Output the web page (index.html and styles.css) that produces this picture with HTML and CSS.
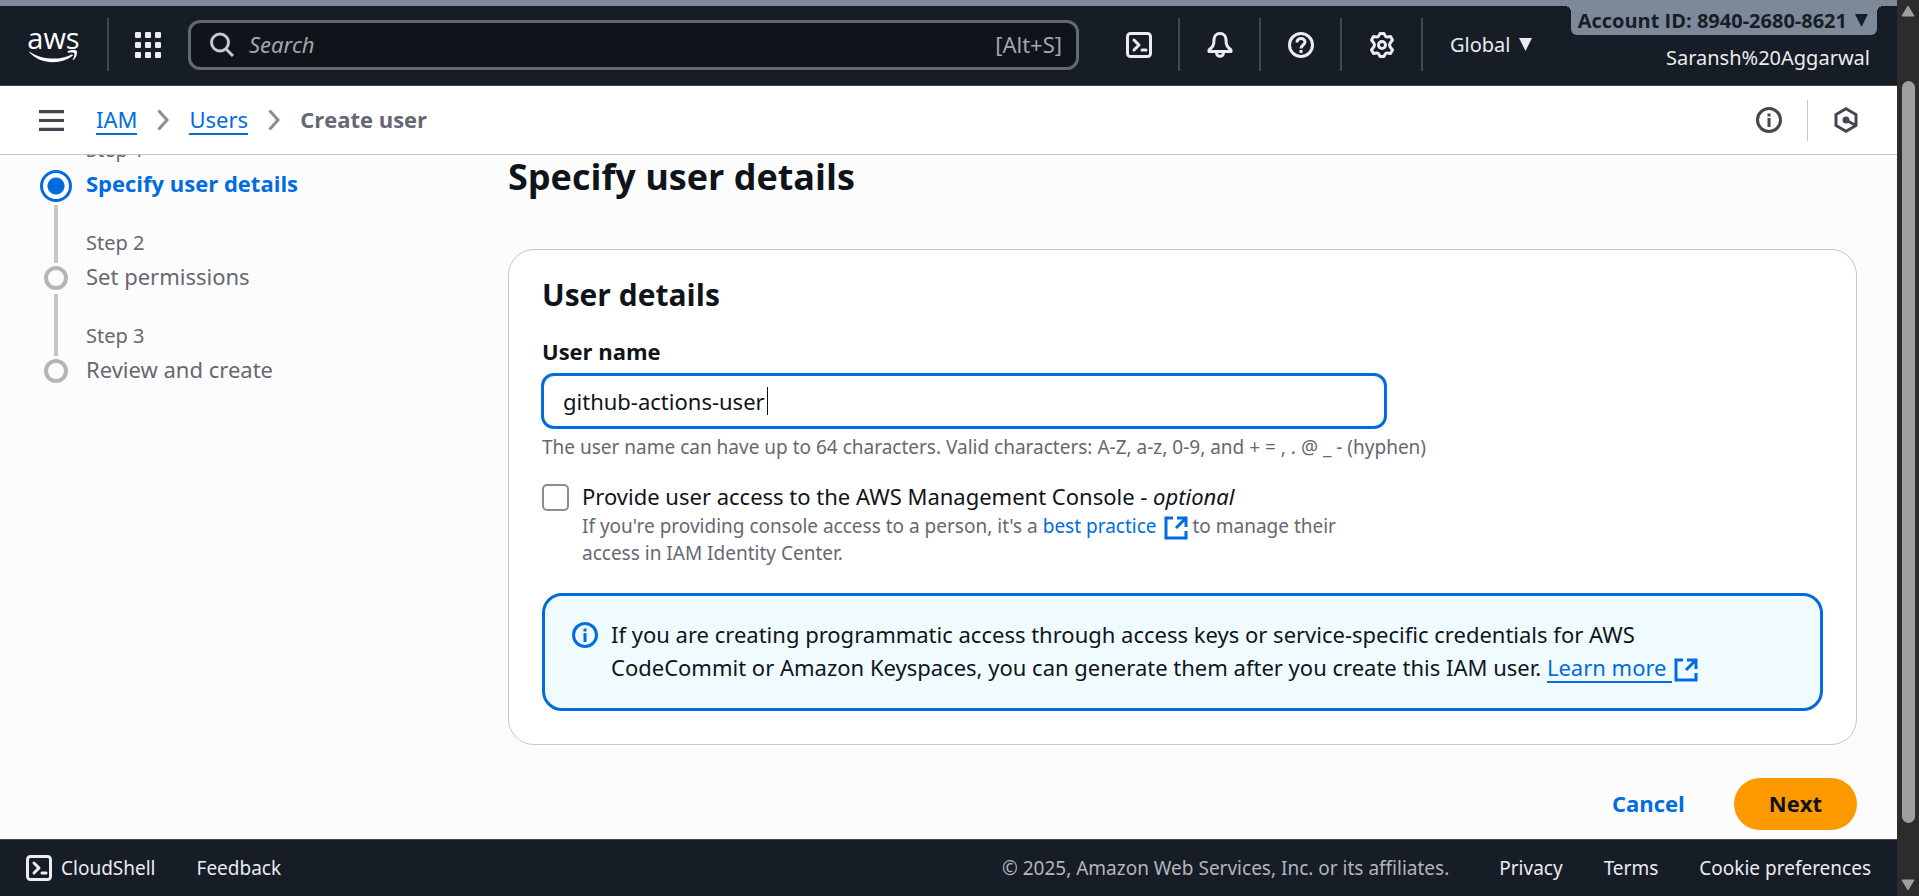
FILE: index.html
```html
<!DOCTYPE html>
<html lang="en">
<head>
<meta charset="utf-8">
<meta name="viewport" content="width=device-width, initial-scale=1">
<title>Create user | IAM</title>
<link rel="stylesheet" href="styles.css">
</head>
<body>
<svg class="sprite" aria-hidden="true">
  <symbol id="i-shell" viewBox="0 0 26 26"><rect x="1.5" y="1.5" width="23" height="23" rx="3" /><path d="M8 8l5 5-5 5M16 18h4" stroke-linecap="round" stroke-linejoin="round"/></symbol>
  <symbol id="i-info" viewBox="0 0 26 26"><circle cx="13" cy="13" r="11.5"/><path d="M13 11v9M13 6.500v3"/></symbol>
  <symbol id="i-ext" viewBox="0 0 24 24"><path d="M9 2H2v20h20v-7M13 2h9v9M21 3l-9 9"/></symbol>
</svg>
<div class="window">
  <div class="app">
    <header class="topnav">
      <a class="logo" href="#" aria-label="AWS">
        <span class="logo-text">aws</span>
        <svg class="logo-smile" viewBox="0 0 52 14"><path d="M0 1.500C14 11 33 11.500 46 4.500L47 6C34 16.500 11 15.500 0 2.500Z"/><path d="M41 1.500C45 -.5 50 -.3 51 1.200C52 4 50 8.500 47.500 10.700C47 11 46.600 10.700 46.800 10.200C48 7.500 49 4.500 48.500 3.500C47.800 2.500 44.500 2.700 41.500 3Z"/></svg>
      </a>
      <span class="rule"></span>
      <button class="apps" aria-label="Services">
        <svg class="icon fill" viewBox="0 0 26 26"><rect width="6" height="6" rx="1"/><rect x="10" width="6" height="6" rx="1"/><rect x="20" width="6" height="6" rx="1"/><rect y="10" width="6" height="6" rx="1"/><rect x="10" y="10" width="6" height="6" rx="1"/><rect x="20" y="10" width="6" height="6" rx="1"/><rect y="20" width="6" height="6" rx="1"/><rect x="10" y="20" width="6" height="6" rx="1"/><rect x="20" y="20" width="6" height="6" rx="1"/></svg>
      </button>
      <label class="search">
        <svg class="icon" viewBox="0 0 26 26"><circle cx="11" cy="10.500" r="8.500"/><path d="M17 17l7 7"/></svg>
        <input type="search" placeholder="Search" aria-label="Search">
        <span class="hint">[Alt+S]</span>
      </label>
      <nav class="tools" aria-label="Tools">
        <button aria-label="CloudShell"><svg class="icon"><use href="#i-shell"/></svg></button>
        <button aria-label="Notifications"><svg class="icon" viewBox="0 0 26 26"><path d="M13 1.500c-4 0-6 3-6 6.500 0 5.500-1.500 7-5 10v1.500h22V18c-3.500-3-5-4.500-5-10 0-3.500-2-6.500-6-6.500z" stroke-linejoin="round"/><path d="M9.500 20.500c0 5 7 5 7 0"/></svg></button>
        <button aria-label="Help"><svg class="icon" viewBox="0 0 26 26"><circle cx="13" cy="13" r="11.5"/><path d="M9 10.500c0-5.500 8-5 8-.5 0 3-4 3-4 6.500M13 18v3"/></svg></button>
        <button aria-label="Settings"><svg class="icon" viewBox="0 0 26 26"><path d="M11 1.500h4c1 2.500 1.500 4 3.500 3.500l3-.5 2 3.500c-1.500 2-3 3-3 5s1.500 3 3 5l-2 3.500-3-.5c-2-.5-2.500 1-3.500 3.500h-4c-1-2.500-1.500-4-3.500-3.500l-3 .5-2-3.500c1.500-2 3-3 3-5s-1.500-3-3-5l2-3.500 3 .5c2 .5 2.500-1 3.500-3.500z" stroke-linejoin="round"/><circle cx="13" cy="13" r="3.500"/></svg></button>
      </nav>
      <button class="region">Global <svg class="caret" viewBox="0 0 12 12"><path d="M0 0h12L6 12z"/></svg></button>
      <div class="account">
        <button class="account-id">Account ID: 8940-2680-8621 <svg class="caret" viewBox="0 0 12 12"><path d="M0 0h12L6 12z"/></svg></button>
        <span class="account-name">Saransh%20Aggarwal</span>
      </div>
    </header>
    <div class="crumbs">
      <button class="menu" aria-label="Open navigation"><svg class="burger" viewBox="0 0 24 20"><path d="M0 1.500h24M0 10h24M0 18.500h24"/></svg></button>
      <nav class="trail" aria-label="Breadcrumbs">
        <a href="#">IAM</a>
        <svg class="chev" viewBox="0 0 12 22"><path d="M1.500 1.500L10 11 1.500 20.500"/></svg>
        <a href="#">Users</a>
        <svg class="chev" viewBox="0 0 12 22"><path d="M1.500 1.500L10 11 1.500 20.500"/></svg>
        <span class="current">Create user</span>
      </nav>
      <button aria-label="Info"><svg class="icon"><use href="#i-info"/></svg></button>
      <span class="crumb-rule"></span>
      <button aria-label="Resources"><svg class="icon" viewBox="0 0 26 26"><path d="M13 1.800L23 7.500v11L13 24.200 3 18.500v-11z"/><circle class="dot" cx="13" cy="13" r="3.500"/><path d="M13 13l9 5"/></svg></button>
    </div>
    <div class="content">
      <ol class="steps">
        <li class="step active"><span class="mark"></span><span class="num">Step 1</span><a class="name" href="#">Specify user details</a></li>
        <li class="step"><span class="mark"></span><span class="num">Step 2</span><span class="name">Set permissions</span></li>
        <li class="step"><span class="mark"></span><span class="num">Step 3</span><span class="name">Review and create</span></li>
      </ol>
      <main class="main">
        <h1>Specify user details</h1>
        <section class="card">
          <h2>User details</h2>
          <label class="field-label" for="user">User name</label>
          <div class="field-box">
            <input class="field" id="user" type="text" value="github-actions-user">
            <span class="text-cursor"></span>
          </div>
          <p class="help">The user name can have up to 64 characters. Valid characters: A-Z, a-z, 0-9, and + = , . @ _ - (hyphen)</p>
          <div class="check">
            <input type="checkbox" id="console">
            <div>
              <label for="console">Provide user access to the AWS Management Console - <em>optional</em></label>
              <p class="help">If you're providing console access to a person, it's a <a href="#">best practice <svg class="ext"><use href="#i-ext"/></svg></a> to manage their<br>access in IAM Identity Center.</p>
            </div>
          </div>
          <div class="alert">
            <svg class="icon"><use href="#i-info"/></svg>
            <p>If you are creating programmatic access through access keys or service-specific credentials for AWS<br>CodeCommit or Amazon Keyspaces, you can generate them after you create this IAM user. <a href="#"><span class="underlined">Learn more </span><svg class="ext"><use href="#i-ext"/></svg></a></p>
          </div>
        </section>
        <div class="actions"><button class="cancel">Cancel</button><button class="next">Next</button></div>
      </main>
    </div>
    <footer class="footer">
      <button class="shell"><svg class="icon"><use href="#i-shell"/></svg>CloudShell</button>
      <a href="#">Feedback</a>
      <span class="copy">© 2025, Amazon Web Services, Inc. or its affiliates.</span>
      <a href="#">Privacy</a><a href="#">Terms</a><a href="#">Cookie preferences</a>
    </footer>
  </div>
  <div class="scrollbar" aria-hidden="true">
    <svg viewBox="0 0 14 12"><path d="M7 1l6 10H1z"/></svg>
    <span class="thumb"></span>
    <svg viewBox="0 0 14 12"><path d="M7 11L1 1h12z"/></svg>
  </div>
</div>
</body>
</html>
```
FILE: styles.css
```css
* { box-sizing: border-box; }
body { margin: 0; font: 22px/34px "Noto Sans", "Open Sans", sans-serif; color: #0f141a; background: #fcfcfd; }
button { border: 0; padding: 0; margin: 0; background: none; font: inherit; color: inherit; display: flex; align-items: center; cursor: pointer; }
a { color: #006ce0; text-decoration: none; }
h1, h2, p, ol { margin: 0; padding: 0; }
svg { fill: none; stroke: currentColor; stroke-width: 3; flex: none; }
.sprite { position: absolute; width: 0; height: 0; }
.icon { width: 26px; height: 26px; display: block; }
.fill, .caret, .logo-smile { fill: currentColor; stroke: none; }
.caret { width: 13px; height: 13px; }
.window { display: flex; height: 100vh; overflow: hidden; }
.app { flex: 1; min-width: 0; display: flex; flex-direction: column; }
h1, h2, .field-label, .current, .account-id, .actions, .active .name { font-family: "Open Sans", "Noto Sans", sans-serif; font-weight: 700; }

.topnav { display: flex; align-items: center; background: #161d26; color: #ebebf0; border-top: 6px solid #7d8998; border-bottom: 1px solid #424650; height: 86px; flex: none; padding: 0 0 2px 27px; }
.logo { color: #fff; display: flex; flex-direction: column; align-items: center; width: 53px; margin-right: 27px; }
.logo-text { font: 400 29px/24px "Open Sans", sans-serif; }
.logo-smile { width: 53px; height: 13px; }
.rule { width: 2px; height: 53px; background: #424650; }
.apps { margin: 0 27px 0 26px; }
.search { display: flex; align-items: center; gap: 14px; width: 891px; height: 50px; border: 3px solid #656871; border-radius: 12px; background: #0f141a; padding: 0 14px 0 18px; color: #a4a4ad; }
.search input { flex: 1; min-width: 0; border: 0; outline: 0; background: none; font: inherit; color: inherit; padding: 0 0 2px; }
.search input::placeholder { color: #a4a4ad; font-style: italic; opacity: 1; }
.search .icon { color: #c6c6cd; }
.hint { padding-bottom: 2px; }
.tools { display: flex; margin-left: 20px; }
.tools button { width: 81px; height: 53px; justify-content: center; border-right: 2px solid #424650; }
.region { gap: 8px; font-size: 20px; margin-left: 27px; white-space: nowrap; }
.account { margin-left: auto; align-self: stretch; display: flex; flex-direction: column; align-items: flex-end; white-space: nowrap; font-size: 20px; padding-right: 20px; }
.account-id { position: relative; gap: 8px; height: 29px; padding: 0 9px 0 7px; background: #7d8998; color: #161d26; border-radius: 0 0 6px 6px; }
.account-id::before, .account-id::after { content: ""; position: absolute; top: 0; width: 6px; height: 6px; }
.account-id::before { right: 100%; background: radial-gradient(circle at 0 100%, transparent 6px, #7d8998 6px); }
.account-id::after { left: 100%; background: radial-gradient(circle at 100% 100%, transparent 6px, #7d8998 6px); }
.account-name { margin-top: 6px; padding-right: 7px; }

.crumbs { display: flex; align-items: center; flex: none; height: 69px; padding: 0 38px 0 39px; background: #fff; border-bottom: 1px solid #c6c6cd; color: #424650; }
.burger { width: 25px; height: 21px; }
.trail { display: flex; align-items: center; gap: 20px; margin: 0 auto 0 32px; }
.trail a { line-height: 28px; border-bottom: 2px solid; }
.chev { width: 12px; height: 22px; color: #8c8c94; }
.current { padding-bottom: 2px; color: #656871; }
.crumb-rule { width: 1px; height: 41px; background: #c6c6cd; margin: 0 25px; }
.dot { fill: currentColor; stroke: none; }

.content { flex: 1; min-height: 0; display: flex; overflow: hidden; padding: 0 40px; }
.steps { list-style: none; width: 468px; flex: none; margin-top: -20px; color: #656871; }
.step { position: relative; display: flex; flex-direction: column; height: 93px; padding-left: 46px; }
.step:not(:last-child)::before { content: ""; position: absolute; left: 14px; top: 66px; bottom: -35px; width: 4px; background: #c6c6cd; }
.num { font-size: 20px; line-height: 30px; }
.name { line-height: 36px; }
.mark { position: absolute; left: 4px; top: 38px; width: 24px; height: 24px; border: 4px solid #b4b4bb; border-radius: 50%; background: #fcfcfd; box-shadow: 0 0 0 3px #fcfcfd; z-index: 1; }
.active .mark { left: 0; top: 35px; width: 32px; height: 32px; border: 3px solid #006ce0; background: radial-gradient(#006ce0 8px, #fff 9px); }
.active .name { color: #006ce0; }
.main { flex: 1; min-width: 0; }
h1 { font-size: 36px; line-height: 44px; margin-bottom: 50px; }
.card { border: 1px solid #c6c6cd; border-radius: 26px; background: #fff; padding: 25px 33px 33px; }
h2 { font-size: 30px; line-height: 40px; margin-bottom: 19px; }
.field-label { display: block; margin-bottom: 5px; }
.field-box { position: relative; width: 846px; max-width: 100%; margin: 0 0 5px -1px; }
.field { display: block; width: 100%; height: 56px; border: 3px solid #006ce0; border-radius: 13px; outline: 0; font: inherit; color: inherit; padding: 0 19px; background: #fff; }
.text-cursor { position: absolute; left: 226px; top: 14px; width: 1px; height: 28px; background: #0f141a; }
.help { font-size: 19px; line-height: 26px; color: #656871; }
.check { display: flex; gap: 13px; margin-top: 19px; }
.check input { appearance: none; width: 27px; height: 27px; margin: 5px 0 0; border: 2px solid #8c8c94; border-radius: 5px; flex: none; }
.ext { width: 24px; height: 24px; margin-left: 2px; vertical-align: middle; }
.alert { display: flex; gap: 13px; margin-top: 27px; padding: 22px 27px 24px; border: 3px solid #006ce0; border-radius: 20px; background: #f0fbff; line-height: 33px; }
.alert .icon { color: #006ce0; margin-top: 4px; }
.underlined { display: inline-block; line-height: 28px; border-bottom: 2px solid; white-space: pre; }
.actions { display: flex; justify-content: flex-end; gap: 49px; margin-top: 33px; }
.cancel { color: #006ce0; padding-bottom: 2px; }
.next { background: #f90; padding: 0 35px 2px; height: 52px; border-radius: 26px; }

.footer { flex: none; display: flex; align-items: center; gap: 41px; height: 57px; padding: 0 26px; background: #161d26; border-top: 1px solid #424650; color: #ebebf0; font-size: 19px; white-space: nowrap; }
.footer a { color: inherit; }
.shell { gap: 9px; }
.copy { margin-left: auto; color: #b4b4bb; padding-right: 9px; }
.scrollbar { width: 22px; flex: none; background: #2c2c2c; color: #9f9f9f; display: flex; flex-direction: column; align-items: center; padding: 5px 0; }
.scrollbar svg { width: 14px; height: 12px; fill: currentColor; stroke-linejoin: round; stroke-width: 1; }
.thumb { width: 13px; background: #9f9f9f; border-radius: 7px; flex: 0 1 742px; margin: 64px 0 auto; }
```
